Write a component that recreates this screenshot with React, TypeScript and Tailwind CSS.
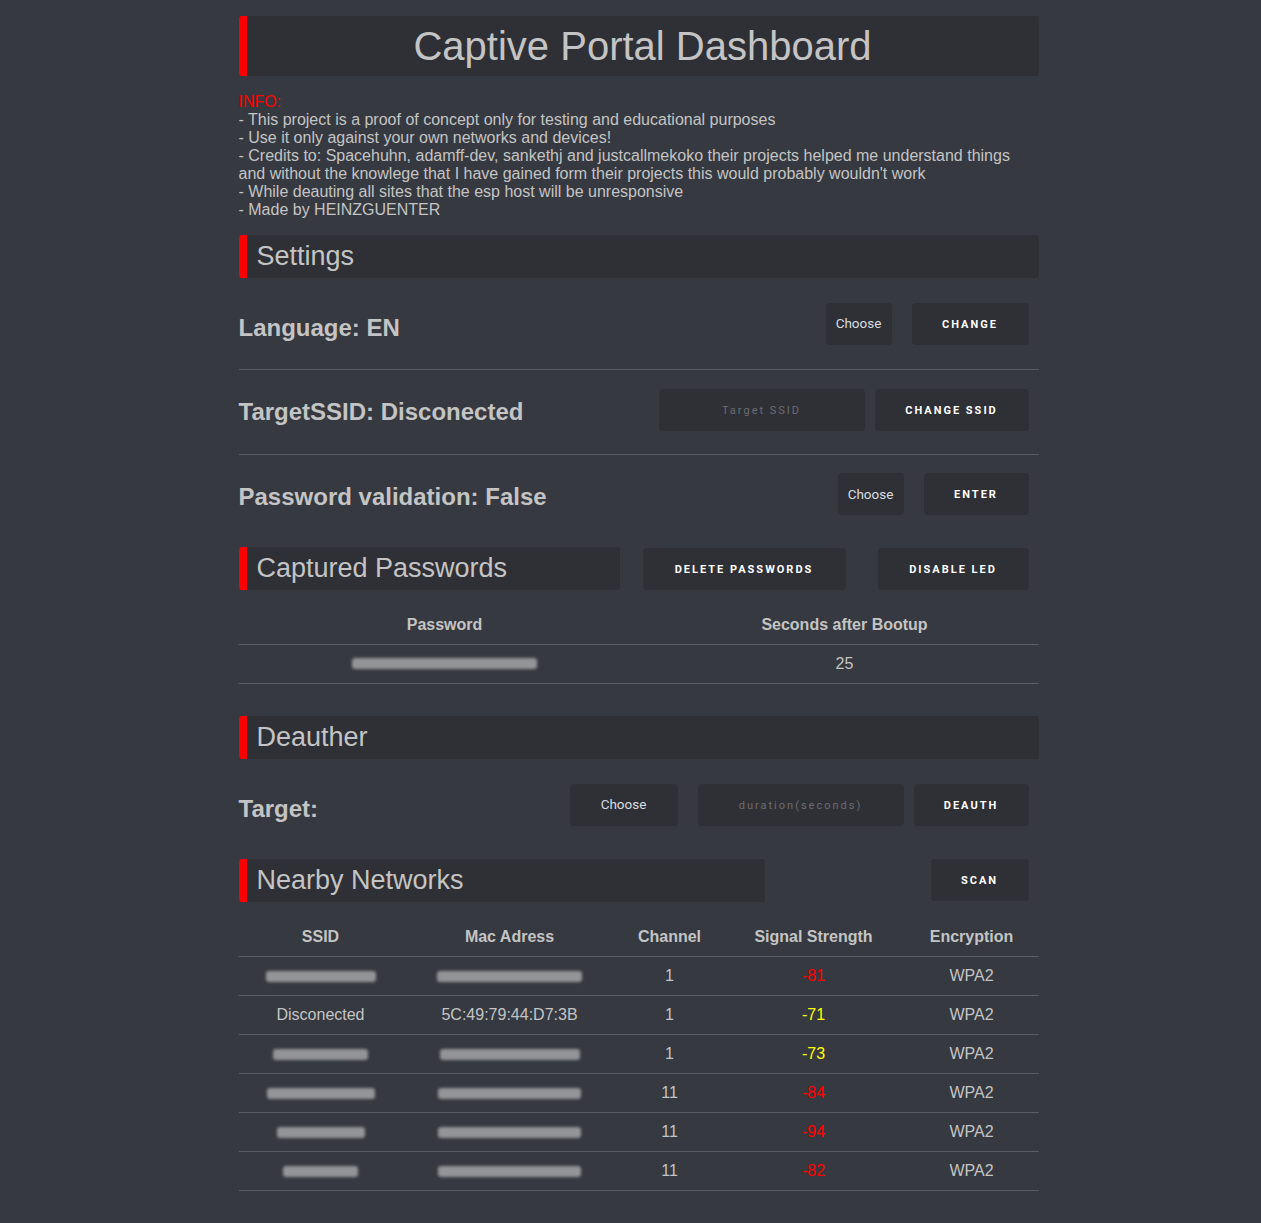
import React from 'react';

const font = { fontFamily: '"Liberation Sans", Arial, sans-serif' };

const Header: React.FC<{ title: string; className?: string }> = ({ title, className = '' }) => (
  <div className={`flex h-[43px] items-center rounded-[3px] bg-[#2f3035] ${className}`}>
    <div className="h-full w-[8px] rounded-l-[3px] bg-[#ff0000]" />
    <span className="ml-[10px] text-[27px] leading-none text-[#c4c4c4]">{title}</span>
  </div>
);

const Btn: React.FC<{ label: string; w: string }> = ({ label, w }) => (
  <button
    className={`${w} h-[42px] rounded-[4px] bg-[#2f3035] pt-[3px] text-[11px] font-bold tracking-[2px] text-white`}
    style={{ fontFamily: 'Roboto, "Liberation Sans", sans-serif' }}
  >
    {label}
  </button>
);

const Choose: React.FC<{ w: string }> = ({ w }) => (
  <button
    className={`${w} h-[42px] rounded-[4px] bg-[#2f3035] text-[13.5px] text-[#d8dde0]`}
    style={{ fontFamily: 'Roboto, "Liberation Sans", sans-serif' }}
  >
    Choose
  </button>
);

const Input: React.FC<{ placeholder: string }> = ({ placeholder }) => (
  <div
    className="flex h-[42px] w-[206px] items-center justify-center rounded-[4px] bg-[#2f3035] pt-[3px] text-[11px] tracking-[2px] text-[#6b6d70]"
    style={{ fontFamily: 'Roboto, "Liberation Sans", sans-serif' }}
  >
    {placeholder}
  </div>
);

const Blur: React.FC<{ w: string }> = ({ w }) => (
  <div className={`mx-auto h-[11px] ${w} rounded-[3px] bg-[#929497] blur-[1.5px]`} />
);

const networks = [
  { ssid: 'w-[110px]', mac: 'w-[145px]', ch: '1', sig: '-81', color: 'text-[#ff0000]' },
  { ssid: 'Disconected', mac: '5C:49:79:44:D7:3B', ch: '1', sig: '-71', color: 'text-[#ffff00]' },
  { ssid: 'w-[95px]', mac: 'w-[140px]', ch: '1', sig: '-73', color: 'text-[#ffff00]' },
  { ssid: 'w-[108px]', mac: 'w-[143px]', ch: '11', sig: '-84', color: 'text-[#ff0000]' },
  { ssid: 'w-[88px]', mac: 'w-[143px]', ch: '11', sig: '-94', color: 'text-[#ff0000]' },
  { ssid: 'w-[75px]', mac: 'w-[143px]', ch: '11', sig: '-82', color: 'text-[#ff0000]' },
];

export default function App() {
  return (
    <div className="min-h-[1223px] bg-[#36393f] pt-[16px] pb-[32px]" style={font}>
      <div className="mx-auto w-[816px] pl-[16px] text-[#c4c4c4]">
        <div className="flex h-[60px] items-center rounded-[3px] bg-[#2f3035]">
          <div className="h-full w-[8px] rounded-l-[3px] bg-[#ff0000]" />
          <h1 className="flex-1 text-center text-[40px] leading-none text-[#c4c4c4]">Captive Portal Dashboard</h1>
        </div>

        <div className="mt-[17px] text-[16px] leading-[18px]">
          <div className="text-[#ff0000]">INFO:</div>
          <div>- This project is a proof of concept only for testing and educational purposes</div>
          <div>- Use it only against your own networks and devices!</div>
          <div>
            - Credits to: Spacehuhn, adamff-dev, sankethj and justcallmekoko their projects helped me understand things
            and without the knowlege that I have gained form their projects this would probably wouldn't work
          </div>
          <div>- While deauting all sites that the esp host will be unresponsive</div>
          <div>- Made by HEINZGUENTER</div>
        </div>

        <Header title="Settings" className="mt-[16px]" />

        <div className="flex h-[92px] items-center border-b border-[#5a5c60] pr-[10px]">
          <span className="flex-1 pt-[8px] text-[24px] font-bold">Language: EN</span>
          <div className="flex gap-[20px]">
            <Choose w="w-[66px]" />
            <Btn label="CHANGE" w="w-[117px]" />
          </div>
        </div>

        <div className="flex h-[85px] items-center border-b border-[#5a5c60] pr-[10px]">
          <span className="flex-1 text-[24px] font-bold">TargetSSID: Disconected</span>
          <div className="mb-[4px] flex gap-[10px]">
            <Input placeholder="Target SSID" />
            <Btn label="CHANGE SSID" w="w-[154px]" />
          </div>
        </div>

        <div className="flex h-[84px] items-center pr-[10px]">
          <span className="flex-1 text-[24px] font-bold">Password validation: False</span>
          <div className="mb-[6px] flex gap-[20px]">
            <Choose w="w-[66px]" />
            <Btn label="ENTER" w="w-[105px]" />
          </div>
        </div>

        <div className="mt-[8px] flex items-center pr-[10px]">
          <Header title="Captured Passwords" className="w-[381px]" />
          <div className="ml-auto flex gap-[32px]">
            <Btn label="DELETE PASSWORDS" w="w-[203px]" />
            <Btn label="DISABLE LED" w="w-[151px]" />
          </div>
        </div>

        <table className="mt-[14px] w-full table-fixed border-collapse text-[16px]">
          <thead>
            <tr className="border-b border-[#5a5c60]">
              <th className="h-[40px] w-[412px] pt-[2px] font-bold">Password</th>
              <th className="h-[40px] pt-[2px] font-bold">Seconds after Bootup</th>
            </tr>
          </thead>
          <tbody>
            <tr className="border-b border-[#5a5c60]">
              <td className="h-[39px]"><Blur w="w-[185px]" /></td>
              <td className="h-[39px] text-center">25</td>
            </tr>
          </tbody>
        </table>

        <Header title="Deauther" className="mt-[32px]" />

        <div className="flex h-[100px] items-center pr-[10px]">
          <span className="flex-1 text-[24px] font-bold">Target:</span>
          <div className="mb-[8px] flex gap-[20px]">
            <Choose w="w-[108px]" />
            <div className="flex gap-[10px]">
              <Input placeholder="duration(seconds)" />
              <Btn label="DEAUTH" w="w-[115px]" />
            </div>
          </div>
        </div>

        <div className="flex items-center pr-[10px]">
          <Header title="Nearby Networks" className="w-[526px]" />
          <div className="ml-auto">
            <Btn label="SCAN" w="w-[98px]" />
          </div>
        </div>

        <table className="mt-[15px] w-full table-fixed border-collapse text-[16px]">
          <thead>
            <tr className="border-b border-[#5a5c60]">
              <th className="h-[40px] w-[164px] pt-[2px] font-bold">SSID</th>
              <th className="h-[40px] w-[214px] pt-[2px] font-bold">Mac Adress</th>
              <th className="h-[40px] w-[106px] pt-[2px] font-bold">Channel</th>
              <th className="h-[40px] w-[182px] pt-[2px] font-bold">Signal Strength</th>
              <th className="h-[40px] pt-[2px] font-bold">Encryption</th>
            </tr>
          </thead>
          <tbody>
            {networks.map((n, i) => (
              <tr key={i} className="border-b border-[#5a5c60]">
                <td className="h-[39px] text-center">
                  {n.ssid.startsWith('w-') ? <Blur w={n.ssid} /> : n.ssid}
                </td>
                <td className="h-[39px] text-center">
                  {n.mac.startsWith('w-') ? <Blur w={n.mac} /> : n.mac}
                </td>
                <td className="h-[39px] text-center">{n.ch}</td>
                <td className={`h-[39px] text-center ${n.color}`}>{n.sig}</td>
                <td className="h-[39px] text-center">WPA2</td>
              </tr>
            ))}
          </tbody>
        </table>
      </div>
    </div>
  );
}
